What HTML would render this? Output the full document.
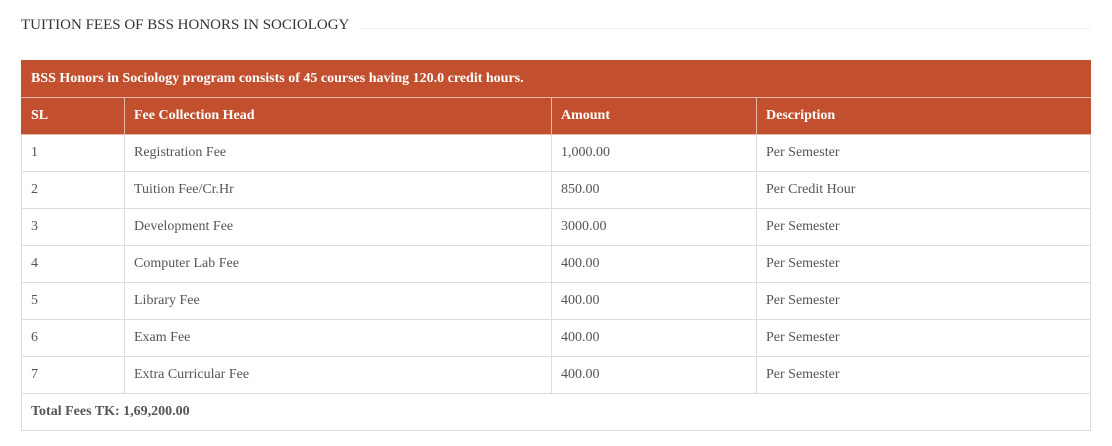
<!DOCTYPE html><html><head><style>
body{margin:0;background:#fff;font-family:"Liberation Serif",serif;}
.t{position:absolute;left:21px;top:17px;font-size:15px;color:#333;}
.l{position:absolute;left:360px;top:28px;width:730px;height:1px;background:#eee;}
table{position:absolute;left:21px;top:60px;width:1070px;border-collapse:collapse;font-size:14px;color:#555;}
td{border:1px solid #ddd;height:37px;padding:0 9px;box-sizing:border-box;}
tr.h td{background:#c2502e;color:#fff;font-weight:bold;border-color:#e8b8a8;}
tr.h td{border-top-color:#c2502e;}
</style></head><body>
<div class="t">TUITION FEES OF BSS HONORS IN SOCIOLOGY</div><div class="l"></div>
<table>
<tr class="h"><td colspan="4" style="border-left-color:#c2502e;border-right-color:#c2502e">BSS Honors in Sociology program consists of 45 courses having 120.0 credit hours.</td></tr>
<tr class="h"><td style="width:103px;border-left-color:#c2502e">SL</td><td style="width:427px">Fee Collection Head</td><td style="width:205px">Amount</td><td style="border-right-color:#c2502e">Description</td></tr>
<tr><td>1</td><td>Registration Fee</td><td>1,000.00</td><td>Per Semester</td></tr>
<tr><td>2</td><td>Tuition Fee/Cr.Hr</td><td>850.00</td><td>Per Credit Hour</td></tr>
<tr><td>3</td><td>Development Fee</td><td>3000.00</td><td>Per Semester</td></tr>
<tr><td>4</td><td>Computer Lab Fee</td><td>400.00</td><td>Per Semester</td></tr>
<tr><td>5</td><td>Library Fee</td><td>400.00</td><td>Per Semester</td></tr>
<tr><td>6</td><td>Exam Fee</td><td>400.00</td><td>Per Semester</td></tr>
<tr><td>7</td><td>Extra Curricular Fee</td><td>400.00</td><td>Per Semester</td></tr>
<tr><td colspan="4" style="font-weight:bold">Total Fees TK: 1,69,200.00</td></tr>
</table>
</body></html>
